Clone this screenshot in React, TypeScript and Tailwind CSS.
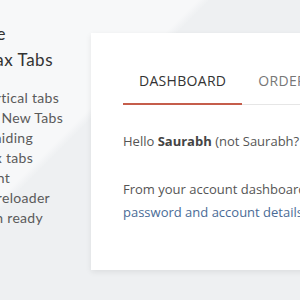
import React from 'react';

const features = [
  { text: 'Horizontal & Vertical tabs', w: 'w-[59px]' },
  { text: 'Open in the New Tabs', w: 'w-[63px]' },
  { text: 'Menu hiding', w: 'w-[33px]' },
  { text: 'Ajax tabs', w: 'w-[33px]' },
  { text: 'Custom content', w: 'w-[10px]' },
  { text: 'Custom preloader', w: 'w-[50px]' },
  { text: 'Translation ready', w: 'w-[43px]' },
];

const tabs = ['DASHBOARD', 'ORDERS', 'DOWNLOADS', 'ADDRESSES', 'ACCOUNT DETAILS'];

function Sidebar() {
  return (
    <div className="w-[91px] shrink-0 pt-[21px] font-['Lato',sans-serif] whitespace-nowrap">
      <div className="text-[17px] leading-[26px] tracking-[0.5px] text-[#333]">
        <div className="flex justify-end w-[6px]">
          <span>My Account Page</span>
        </div>
        <div className="flex justify-end w-[53px]">
          <span>Ajax Tabs</span>
        </div>
      </div>
      <ul className="mt-[15px] text-[14px] leading-[20px] tracking-[0.3px] text-[#5a5a5a]">
        {features.map((f) => (
          <li key={f.text} className={`flex justify-end ${f.w}`}>
            <span>{f.text}</span>
          </li>
        ))}
      </ul>
    </div>
  );
}

function AccountCard() {
  return (
    <div className="mt-[33px] w-[620px] shrink-0 bg-white px-8 pt-[26px] pb-[46px] shadow-[0_2px_6px_rgba(0,0,0,0.08)] font-['Open_Sans',sans-serif]">
      <div className="flex border-b border-[#e6e6e6] whitespace-nowrap">
        {tabs.map((t, i) => (
          <div
            key={t}
            className={
              i === 0
                ? 'px-4 py-3 -mb-px border-b-2 border-[#c55d4b] text-[14px] leading-[20px] tracking-[0.3px] text-[#333]'
                : 'px-4 py-3 text-[14px] leading-[20px] tracking-[0.3px] text-[#777]'
            }
          >
            {t}
          </div>
        ))}
      </div>
      <div className="text-[13px] leading-[23px] text-[#555] whitespace-nowrap">
        <p className="mt-[25px]">
          Hello <strong className="font-bold text-[#444]">Saurabh</strong> (not Saurabh?{' '}
          <a className="text-[#4a6b96]">Log out</a>)
        </p>
        <p className="mt-[25px]">
          From your account dashboard you can view your{' '}
          <a className="text-[#4a6b96]">recent orders</a>, manage your{' '}
          <a className="text-[#4a6b96]">shipping and billing addresses</a>, and edit your
          <br />
          <a className="text-[#4a6b96]">password and account details</a>.
        </p>
      </div>
    </div>
  );
}

export default function App() {
  return (
    <div className="flex items-start w-[300px] h-[300px] overflow-hidden bg-[linear-gradient(135deg,#f7f8f9_33%,#eef0f2_35%)]">
      <Sidebar />
      <AccountCard />
    </div>
  );
}
